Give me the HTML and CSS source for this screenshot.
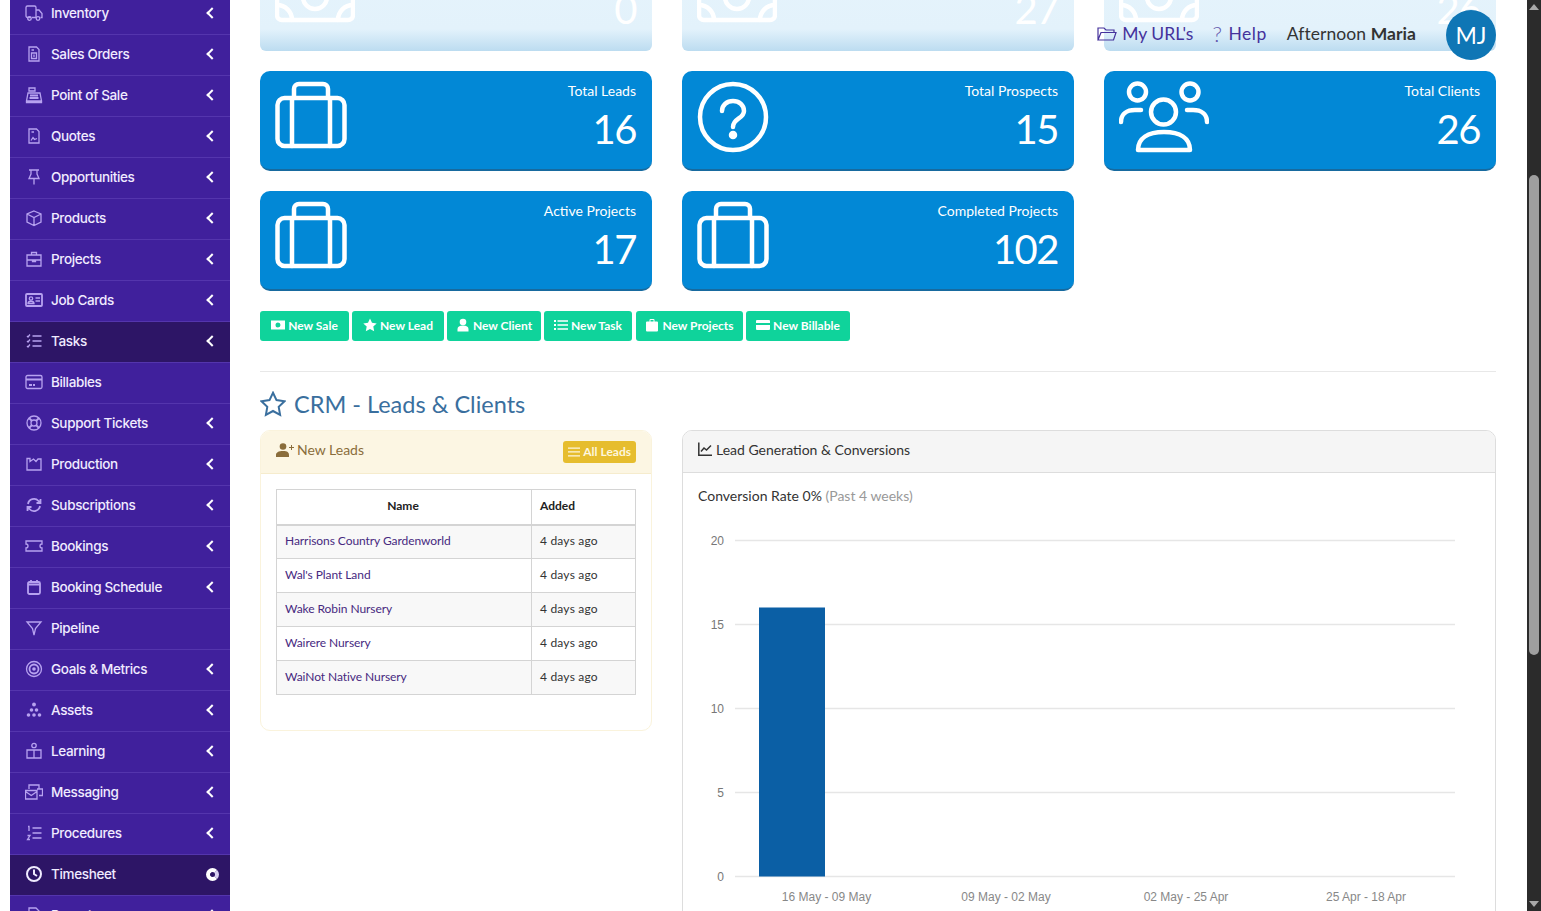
FILE: index.html
```html
<!DOCTYPE html>
<html lang="en">
<head>
<meta charset="utf-8">
<title>Dashboard</title>
<link rel="stylesheet" href="styles.css">
</head>
<body>
<div class="page">
  <nav class="sidebar">
    <ul class="menu">
      <li class="item"><svg class="ico" viewBox="0 0 18 18"><path d="M6 13.500H2.500A1.500 1.500 0 0 1 1 12V3.500A1.500 1.500 0 0 1 2.500 2H9.500A1.500 1.500 0 0 1 11 3.500V13.500M11 6h3l3 3.500V13.500h-1.500M7 13.500h4"/><circle cx="4.500" cy="14.500" r="1.800"/><circle cx="13" cy="14.500" r="1.800"/></svg><span class="lbl">Inventory</span><span class="chev"></span></li>
      <li class="item"><svg class="ico" viewBox="0 0 18 18"><path d="M4 2h7.500L14 4.500V16H4zM6.500 8h5v5.500h-5zM6.500 5H9M9 9.500v2.500"/></svg><span class="lbl">Sales Orders</span><span class="chev"></span></li>
      <li class="item"><svg class="ico" viewBox="0 0 18 18"><path d="M4 2h6v3H4zM1.500 15l1.500-8h12l1.500 8zM1.500 15h15v1.500H1.500z"/><path class="thick" d="M5 9.500h8M4.500 12h9"/></svg><span class="lbl">Point of Sale</span><span class="chev"></span></li>
      <li class="item"><svg class="ico" viewBox="0 0 18 18"><path d="M4 2h7.500L14 4.500V16H4zM6 13.500l2-3 1.500 2 2.500-1M6.500 5H9"/></svg><span class="lbl">Quotes</span><span class="chev"></span></li>
      <li class="item"><svg class="ico" viewBox="0 0 18 18"><path d="M4 2h10M6 2v4l-2 4.500h10L12 6V2M9 10.500v6"/></svg><span class="lbl">Opportunities</span><span class="chev"></span></li>
      <li class="item"><svg class="ico" viewBox="0 0 18 18"><path d="M9 2l7 3v8l-7 3.500L2 13V5zM2 5l7 3.500L16 5M9 8.500v8"/></svg><span class="lbl">Products</span><span class="chev"></span></li>
      <li class="item"><svg class="ico" viewBox="0 0 18 18"><path d="M2 5h14v11H2zM6.500 5V2.500h5V5M2 10h14M7.500 10v1.500h3V10"/></svg><span class="lbl">Projects</span><span class="chev"></span></li>
      <li class="item"><svg class="ico" viewBox="0 0 18 18"><rect class="soft" x="1" y="3" width="16" height="12" rx="1"/><path d="M10.500 7H15M10.500 10H15"/><circle cx="6" cy="7.500" r="1.700"/><path d="M3 12.500c0-3 6-3 6 0z"/></svg><span class="lbl">Job Cards</span><span class="chev"></span></li>
      <li class="item active"><svg class="ico" viewBox="0 0 18 18"><path d="M7.500 4H16.500M7.500 9H16.500M7.500 14H16.500M2 4l1 1 2-2.500M2 9l1 1 2-2.500M2 14l1 1 2-2.500"/></svg><span class="lbl">Tasks</span><span class="chev"></span></li>
      <li class="item"><svg class="ico" viewBox="0 0 18 18"><rect x="1" y="2.500" width="16" height="13" rx="1.500"/><path class="thick" d="M1 6.500h16M4 12h3M8 12h2"/></svg><span class="lbl">Billables</span></li>
      <li class="item"><svg class="ico" viewBox="0 0 18 18"><circle cx="9" cy="9" r="7"/><circle cx="9" cy="9" r="3"/><path class="thick" d="M4 4l3 3M14 4l-3 3M4 14l3-3M14 14l-3-3"/></svg><span class="lbl">Support Tickets</span><span class="chev"></span></li>
      <li class="item"><svg class="ico" viewBox="0 0 18 18"><path d="M2 3.500h3V6.500l3.500-2.500 2.500 2.500 2-2.500h3V15H2z"/></svg><span class="lbl">Production</span><span class="chev"></span></li>
      <li class="item"><svg class="ico" viewBox="0 0 18 18"><path class="thick" d="M3 8a6 6 0 0 1 10.500-3L15.500 7M15.500 3v4h-4M15 10a6 6 0 0 1-10.500 3L2.500 11M2.500 15v-4h4"/></svg><span class="lbl">Subscriptions</span><span class="chev"></span></li>
      <li class="item"><svg class="ico" viewBox="0 0 18 18"><path d="M1 4h16v3a2 2 0 0 0 0 4v3H1v-3a2 2 0 0 0 0-4z"/></svg><span class="lbl">Bookings</span><span class="chev"></span></li>
      <li class="item"><svg class="ico" viewBox="0 0 18 18"><rect class="soft" x="3" y="4" width="12" height="12" rx="1.500"/><path class="thick" d="M3 6.500h12M6 2v3M12 2v3"/></svg><span class="lbl">Booking Schedule</span><span class="chev"></span></li>
      <li class="item"><svg class="ico" viewBox="0 0 18 18"><path d="M2 3h14l-5.500 6.500L9 16l-1.500-6.500z"/></svg><span class="lbl">Pipeline</span></li>
      <li class="item"><svg class="ico" viewBox="0 0 18 18"><circle cx="9" cy="9" r="7.500"/><circle class="thick" cx="9" cy="9" r="4.500"/><circle class="fillc" cx="9" cy="9" r="1.800"/></svg><span class="lbl">Goals &amp; Metrics</span><span class="chev"></span></li>
      <li class="item"><svg class="ico" viewBox="0 0 18 18"><g class="fillc"><circle cx="9" cy="3.500" r="1.900"/><circle cx="6.500" cy="9" r="1.800"/><circle cx="11.500" cy="9" r="1.800"/><circle cx="3.500" cy="14" r="1.800"/><circle cx="9" cy="14" r="1.800"/><circle cx="14.500" cy="14" r="1.800"/></g></svg><span class="lbl">Assets</span><span class="chev"></span></li>
      <li class="item"><svg class="ico" viewBox="0 0 18 18"><circle cx="9" cy="3.500" r="2.200"/><path d="M2 8h7v8H2zM9 8h7v8H9z"/></svg><span class="lbl">Learning</span><span class="chev"></span></li>
      <li class="item"><svg class="ico" viewBox="0 0 18 18"><path d="M4 6V2h10v4M12 6h5.500v6.500H14M.5 7.500h11.500v8.500H.5zM.5 8.500l5.750 4 5.750-4"/></svg><span class="lbl">Messaging</span><span class="chev"></span></li>
      <li class="item"><svg class="ico" viewBox="0 0 18 18"><path d="M7.500 4H16.500M7.500 9H16.500M7.500 14H16.500M3 2.500h1V7M2.500 11.500h2.500L2.500 15.500H5"/></svg><span class="lbl">Procedures</span><span class="chev"></span></li>
      <li class="item active"><svg class="ico ico-bold" viewBox="0 0 18 18"><circle cx="9" cy="9" r="7"/><path d="M9 4.500V9l3 2"/></svg><span class="lbl">Timesheet</span><span class="spin"></span></li>
      <li class="item"><svg class="ico" viewBox="0 0 18 18"><path d="M4 2h7l3 3v11H4z"/></svg><span class="lbl">Reports</span><span class="chev"></span></li>
    </ul>
  </nav>

  <main class="main">
    <section class="stats">
      <div class="stat faded"><svg class="stat-ico bill" viewBox="0 0 80 72"><rect x="2" y="8" width="76" height="51" rx="5"/><path d="M2 44a15 15 0 0 1 15 15M78 44a15 15 0 0 0-15 15M2 23A15 15 0 0 0 17 8M78 23A15 15 0 0 1 63 8"/><circle cx="40" cy="36" r="12"/></svg><div class="stat-text"><div class="stat-label">Total Sales</div><div class="stat-num">0</div></div></div>
      <div class="stat faded"><svg class="stat-ico bill" viewBox="0 0 80 72"><rect x="2" y="8" width="76" height="51" rx="5"/><path d="M2 44a15 15 0 0 1 15 15M78 44a15 15 0 0 0-15 15M2 23A15 15 0 0 0 17 8M78 23A15 15 0 0 1 63 8"/><circle cx="40" cy="36" r="12"/></svg><div class="stat-text"><div class="stat-label">Total Orders</div><div class="stat-num">27</div></div></div>
      <div class="stat faded"><svg class="stat-ico bill" viewBox="0 0 80 72"><rect x="2" y="8" width="76" height="51" rx="5"/><path d="M2 44a15 15 0 0 1 15 15M78 44a15 15 0 0 0-15 15M2 23A15 15 0 0 0 17 8M78 23A15 15 0 0 1 63 8"/><circle cx="40" cy="36" r="12"/></svg><div class="stat-text"><div class="stat-label">Total Invoices</div><div class="stat-num">26</div></div></div>

      <div class="stat"><svg class="stat-ico" viewBox="0 0 72 72"><rect x="2.500" y="17" width="67" height="48" rx="7"/><path d="M17 17v48M55 17v48M19 17V8a5 5 0 0 1 5-5h24a5 5 0 0 1 5 5v9"/></svg><div class="stat-text"><div class="stat-label">Total Leads</div><div class="stat-num">16</div></div></div>
      <div class="stat"><svg class="stat-ico" viewBox="0 0 72 72"><circle cx="36" cy="36" r="33"/><path d="M25 30c0-6 5-10 11-10s11 4 11 10c0 8-11 7-11 16"/><circle class="dot" cx="36" cy="54" r="2"/></svg><div class="stat-text"><div class="stat-label">Total Prospects</div><div class="stat-num">15</div></div></div>
      <div class="stat"><svg class="stat-ico wide" viewBox="0 0 90 72"><circle cx="18.500" cy="11" r="8.500"/><circle cx="71" cy="11" r="8.500"/><circle cx="44.500" cy="31" r="12.500"/><path d="M2 41c0-8 6-12 14-12h6M88 41c0-8-6-12-14-12h-6M19 69c0-12 10-18 26-18s26 6 26 18z"/></svg><div class="stat-text"><div class="stat-label">Total Clients</div><div class="stat-num">26</div></div></div>

      <div class="stat"><svg class="stat-ico" viewBox="0 0 72 72"><rect x="2.500" y="17" width="67" height="48" rx="7"/><path d="M17 17v48M55 17v48M19 17V8a5 5 0 0 1 5-5h24a5 5 0 0 1 5 5v9"/></svg><div class="stat-text"><div class="stat-label">Active Projects</div><div class="stat-num">17</div></div></div>
      <div class="stat"><svg class="stat-ico" viewBox="0 0 72 72"><rect x="2.500" y="17" width="67" height="48" rx="7"/><path d="M17 17v48M55 17v48M19 17V8a5 5 0 0 1 5-5h24a5 5 0 0 1 5 5v9"/></svg><div class="stat-text"><div class="stat-label">Completed Projects</div><div class="stat-num">102</div></div></div>
    </section>

    <div class="actions">
      <a class="btn b1"><svg class="bi" viewBox="0 0 14 14"><path fill-rule="evenodd" d="M0 2.500h14v9H0zM7 4.500a2.500 2.500 0 1 0 0 5 2.500 2.500 0 0 0 0-5z"/></svg>New Sale</a>
      <a class="btn b2"><svg class="bi" viewBox="0 0 14 14"><path d="M7 .5l2 4.300 4.700.6-3.400 3.200.9 4.700L7 11l-4.200 2.300.9-4.700L.3 5.400 5 4.800z"/></svg>New Lead</a>
      <a class="btn b3"><svg class="bi" viewBox="0 0 14 14"><circle cx="7" cy="4" r="3.300"/><path d="M1.500 13.500V11c0-2 2-3.500 5.500-3.500s5.500 1.500 5.500 3.500v2.500z"/></svg>New Client</a>
      <a class="btn b4"><svg class="bi" viewBox="0 0 14 14"><path d="M0 2h2v2H0zM3.500 2.300H14v1.400H3.500zM0 6h2v2H0zM3.500 6.300H14v1.400H3.500zM0 10h2v2H0zM3.500 10.300H14v1.400H3.500z"/></svg>New Task</a>
      <a class="btn b5"><svg class="bi" viewBox="0 0 14 14"><path fill-rule="evenodd" d="M2 3.500h2.500V2a1 1 0 0 1 1-1h3a1 1 0 0 1 1 1v1.500H12a1 1 0 0 1 1 1v8a1 1 0 0 1-1 1H2a1 1 0 0 1-1-1v-8a1 1 0 0 1 1-1zM5.500 2v1.500h3V2z"/></svg>New Projects</a>
      <a class="btn b6"><svg class="bi" viewBox="0 0 14 14"><path d="M1 2h12a1 1 0 0 1 1 1v2H0V3a1 1 0 0 1 1-1zM0 7h14v4a1 1 0 0 1-1 1H1a1 1 0 0 1-1-1z"/></svg>New Billable</a>
    </div>

    <hr class="rule">

    <h2 class="title"><svg class="star" viewBox="0 0 26 26"><path d="M13 1.800l3.500 7.300 8 1.100-5.800 5.600 1.400 8L13 20l-7.100 3.800 1.400-8-5.800-5.600 8-1.100z"/></svg>CRM - Leads &amp; Clients</h2>

    <div class="panels">
      <section class="leads">
        <header class="leads-head">
          <span class="leads-title"><svg class="addu" viewBox="0 0 18 14"><circle cx="7" cy="3.500" r="3.300"/><path d="M0 14v-2c0-2.500 2.500-4 7-4s6 1.500 6 4v2zM13 4h2V2h1v2h2v1h-2v2h-1V5h-2z"/></svg>New Leads</span>
          <a class="all"><svg class="bars" viewBox="0 0 12 10"><path d="M0 .5h12v1.300H0zM0 4.300h12v1.300H0zM0 8.200h12v1.300H0z"/></svg>All Leads</a>
        </header>
        <div class="leads-body">
          <table class="tbl">
            <thead><tr><th class="c-name">Name</th><th class="c-add">Added</th></tr></thead>
            <tbody>
              <tr><td><a>Harrisons Country Gardenworld</a></td><td class="ago">4 days ago</td></tr>
              <tr><td><a>Wal's Plant Land</a></td><td class="ago">4 days ago</td></tr>
              <tr><td><a>Wake Robin Nursery</a></td><td class="ago">4 days ago</td></tr>
              <tr><td><a>Wairere Nursery</a></td><td class="ago">4 days ago</td></tr>
              <tr><td><a>WaiNot Native Nursery</a></td><td class="ago">4 days ago</td></tr>
            </tbody>
          </table>
        </div>
      </section>

      <section class="chartcard">
        <header class="chart-head"><svg class="lineico" viewBox="0 0 14 14"><path d="M.8 0.500V13.200H14M3 9.500l3-3.500 2.500 2L13 3.500"/></svg>Lead Generation &amp; Conversions</header>
        <div class="chart-body">
          <p class="rate">Conversion Rate 0% <span class="muted">(Past 4 weeks)</span></p>
          <svg class="chart" width="812" height="440" viewBox="0 0 812 440">
            <g class="grid">
              <path d="M53 55.500H773M53 139.500H773M53 223.500H773M53 307.500H773M53 391.500H773"/>
            </g>
            <rect class="bar" x="77" y="122.500" width="66" height="269"/>
            <g class="ylab">
              <text x="42" y="59.500">20</text>
              <text x="42" y="143.500">15</text>
              <text x="42" y="227.500">10</text>
              <text x="42" y="311.500">5</text>
              <text x="42" y="395.500">0</text>
            </g>
            <g class="xlab">
              <text x="144.500" y="415.500">16 May - 09 May</text>
              <text x="324" y="415.500">09 May - 02 May</text>
              <text x="504" y="415.500">02 May - 25 Apr</text>
              <text x="684" y="415.500">25 Apr - 18 Apr</text>
            </g>
          </svg>
        </div>
      </section>
    </div>
  </main>

  <div class="scrollbar">
    <span class="arrow up"></span>
    <span class="thumb"></span>
    <span class="arrow down"></span>
  </div>
</div>

<div class="topbar">
  <a class="tlink"><svg class="tfolder" viewBox="0 0 20 16"><path d="M1 14V2h6l2 2h8v2.500M1 14l3-7.500h15L16.500 14z"/></svg>My URL's</a>
  <a class="tlink thelp"><span class="q">?</span>Help</a>
  <span class="greet">Afternoon <b>Maria</b></span>
  <span class="avatar">MJ</span>
</div>
</body>
</html>
```

FILE: styles.css
```css
* { box-sizing: border-box; }
html, body { margin: 0; padding: 0; height: 911px; overflow: hidden; background: #fff; }
body { font-family: "Lato", "Liberation Sans", sans-serif; color: #333; position: relative; }

.page { display: flex; height: 911px; overflow: hidden; }

/* sidebar */
.sidebar { width: 220px; margin-left: 10px; flex: none; background: #40209c; overflow: hidden; }
.menu { list-style: none; margin: -6px 0 0; padding: 0; }
.item { height: 41px; display: flex; align-items: center; padding: 0 15px 2px 15px; border-bottom: 1px solid #5435ad; color: #f0ebff; font-family: "Inter", sans-serif; font-size: 13.500px; font-weight: 500; letter-spacing: -.35px; }
.item.active { background: #2d1566; }
.ico { width: 18px; height: 18px; flex: none; fill: none; stroke: #b7a2f0; stroke-width: 1.300; margin-right: 8px; }
.ico .thick { stroke-width: 1.800; }
.ico .soft { stroke-width: 1.800; }
.ico .fillc { fill: #b7a2f0; stroke: none; }
.ico-bold { stroke: #f0ebff; stroke-width: 2; }
.lbl { flex: 1; white-space: nowrap; }
.chev { width: 8px; height: 8px; border-left: 2.500px solid #fff; border-bottom: 2.500px solid #fff; transform: rotate(45deg); margin-right: -1px; }
.spin { width: 13px; height: 13px; border-radius: 50%; border: 4px solid #fff; border-right-color: #d8cff2; margin-right: -4px; }

/* main */
.main { flex: 1; min-width: 0; padding: 0 31px 0 30px; }
.stats { display: grid; grid-template-columns: repeat(3, 392px); gap: 20px 30px; margin-top: -49px; }
.stat { height: 100px; display: flex; justify-content: space-between; background: #0288d6; border-bottom: 2px solid #176a9f; border-radius: 10px; padding: 10px 16px 0 15px; color: #fff; }
.stat.faded { background: linear-gradient(#e6f4fc 0, #e3f2fb 78%, #bcdcf0 100%); border-bottom: 0; border-radius: 0 0 6px 6px; }
.stat-ico { width: 72px; height: 72px; fill: none; stroke: #fff; stroke-width: 4.500; flex: none; stroke-linecap: round; stroke-linejoin: round; }
.stat-ico.wide { width: 90px; }
.stat-ico.bill { width: 80px; }
.dot { fill: #fff; }
.stat-text { text-align: right; }
.stat-label { font-family: "Lato", sans-serif; font-size: 14px; line-height: 20px; }
.stat-num { font-family: "Lato", sans-serif; font-size: 40px; font-weight: 400; line-height: 48px; margin-top: 4px; letter-spacing: -1.500px; }

.actions { display: flex; margin-top: 20px; gap: 3px; }
.btn { height: 30px; display: flex; align-items: center; justify-content: center; padding-bottom: 2px; background: #0fd39b; color: #fff; border-radius: 3px; font-size: 12px; font-weight: 700; }
.b1 { width: 89px; }
.b2 { width: 92px; }
.b3 { width: 94px; }
.b4 { width: 88px; }
.b5 { width: 107px; margin-left: 1px; }
.b6 { width: 104px; }
.bi { width: 14px; height: 14px; fill: #fff; margin-right: 3px; }

.rule { border: 0; border-top: 1px solid #e8e8e8; margin: 30px 0 0; }
.title { display: flex; align-items: center; margin: 18px 0 0; height: 28px; font-size: 23.500px; font-weight: 400; color: #3a6f9e; }
.star { width: 26px; height: 26px; fill: none; stroke: #3a6f9e; stroke-width: 2; margin-right: 8px; }

.panels { display: flex; gap: 30px; margin-top: 12px; align-items: flex-start; }
.leads { width: 392px; height: 301px; flex: none; border: 1px solid #faf3dc; border-radius: 10px; overflow: hidden; }
.leads-head { height: 43px; display: flex; align-items: center; justify-content: space-between; background: #fcf6e3; border-bottom: 1px solid #f6eccd; padding: 0 15px 5px; color: #8a6d3b; font-size: 14px; }
.leads-title { display: flex; align-items: center; }
.addu { width: 18px; height: 14px; fill: #8a6d3b; margin-right: 3px; }
.all { display: flex; align-items: center; height: 22px; margin-top: 4px; padding: 0 5px; background: #e6bd2e; border-radius: 3px; color: #fdf6dd; font-size: 12px; font-weight: 700; }
.bars { width: 12px; height: 10px; fill: #fdf6dd; margin-right: 3px; }
.leads-body { padding: 15px; }
.tbl { width: 360px; border-collapse: collapse; font-size: 12px; table-layout: fixed; }
.tbl th, .tbl td { border: 1px solid #d4d4d4; height: 34px; padding: 0 8px; text-align: left; }
.tbl th { height: 35px; font-weight: 700; color: #222; border-bottom-width: 2px; padding-bottom: 3px; }
.tbl .c-name { width: 255px; text-align: center; padding-right: 10px; }
.tbl tbody td { padding-bottom: 3px; }
.tbl tbody tr:nth-child(odd) { background: #f8f8f8; }
.tbl a { color: #47297f; letter-spacing: -.07px; }
.tbl .ago { letter-spacing: .2px; }

.chartcard { flex: 1; min-width: 0; height: 600px; border: 1px solid #ddd; border-radius: 10px 10px 0 0; overflow: hidden; }
.chart-head { height: 42px; display: flex; align-items: center; background: #f5f5f5; border-bottom: 1px solid #ddd; padding: 0 15px 5px; font-size: 14px; color: #333; }
.lineico { width: 14px; height: 14px; fill: none; stroke: #333; stroke-width: 1.500; margin-right: 4px; }
.chart-body { padding: 0; }
.rate { margin: 14px 0 0 15px; font-size: 14px; line-height: 18px; color: #333; }
.muted { color: #999; }
.chart { display: block; margin: -20px 0 0 -1px; }
.grid path { fill: none; stroke: #e6e6e6; stroke-width: 1.500; }
.bar { fill: #0b5fa5; }
.ylab text { font-family: "Liberation Sans", sans-serif; font-size: 12px; fill: #777; text-anchor: end; }
.xlab text { font-family: "Liberation Sans", sans-serif; font-size: 12px; fill: #888; text-anchor: middle; }

/* scrollbar */
.scrollbar { width: 14px; flex: none; background: #2b2b2b; position: relative; }
.thumb { position: absolute; left: 2px; right: 2px; top: 175px; height: 480px; background: #9f9f9f; border-radius: 5px; }
.arrow { position: absolute; left: 2px; width: 0; height: 0; border-left: 5px solid transparent; border-right: 5px solid transparent; }
.arrow.up { top: 4px; border-bottom: 6px solid #a8a8a8; }
.arrow.down { bottom: 4px; border-top: 6px solid #a8a8a8; }

/* overlay header */
.topbar { position: absolute; top: 10px; right: 45px; height: 50px; display: flex; align-items: center; padding-bottom: 3px; font-size: 17.500px; }
.tlink { display: flex; align-items: center; color: #45329c; }
.tfolder { width: 20px; height: 16px; fill: none; stroke: #45329c; stroke-width: 1.200; margin-right: 5px; }
.thelp { margin-left: 19px; letter-spacing: .5px; }
.q { width: 16px; font-size: 22px; font-weight: 300; line-height: 22px; opacity: .8; }
.greet { margin-left: 20px; color: #333; letter-spacing: .06px; }
.avatar { margin-left: 30px; width: 50px; height: 50px; border-radius: 50%; background: #0f76b5; color: #fff; display: flex; align-items: center; justify-content: center; font-size: 23px; margin-bottom: -3px; }
```
